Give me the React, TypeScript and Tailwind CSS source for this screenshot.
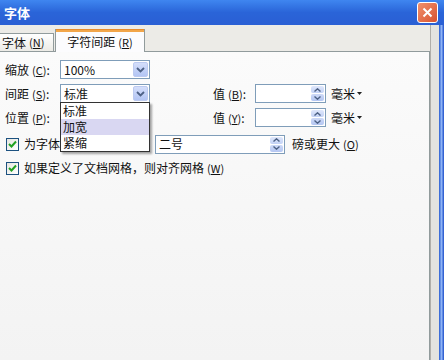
import React from "react";

const font = { fontFamily: '"Noto Sans CJK SC", "Noto Sans", sans-serif' };

function U({ c }: { c: string }) {
  return (
    <span className="text-[11px] ml-[3px]">
      (<span className="underline">{c}</span>)
    </span>
  );
}

function Chevron({ up }: { up?: boolean }) {
  return (
    <svg width="7" height="4" viewBox="0 0 7 4">
      <path
        d={up ? "M0.5 3.5 L3.5 0.8 L6.5 3.5" : "M0.5 0.5 L3.5 3.2 L6.5 0.5"}
        fill="none"
        stroke="#4d6185"
        strokeWidth="1.4"
      />
    </svg>
  );
}

function Combo({ value, w }: { value: string; w: string }) {
  return (
    <div className={`${w} h-[19px] border border-[#7f9db9] bg-white flex items-center pl-[3px] pr-[1px]`}>
      <span className="flex-1 text-[12px] leading-none text-[#111]">{value}</span>
      <div className="w-[15px] h-[15px] rounded-[2px] bg-gradient-to-b from-[#d4defa] to-[#b3c5f4] border border-[#bccaf0] flex items-center justify-center">
        <svg width="9" height="6" viewBox="0 0 9 6">
          <path d="M1 1 L4.5 4.5 L8 1" fill="none" stroke="#4d6185" strokeWidth="1.8" />
        </svg>
      </div>
    </div>
  );
}

function Spin({ value, w }: { value?: string; w: string }) {
  return (
    <div className={`${w} h-[19px] border border-[#7f9db9] bg-white flex items-center pl-[3px] pr-[1px]`}>
      <span className="flex-1 text-[12px] leading-none text-[#111]">{value}</span>
      <div className="w-[13px] h-[15px] flex flex-col gap-[1px]">
        <div className="flex-1 rounded-[2px] bg-gradient-to-b from-[#dfe7fb] to-[#c2d1f5] flex items-center justify-center">
          <Chevron up />
        </div>
        <div className="flex-1 rounded-[2px] bg-gradient-to-b from-[#cdd9f7] to-[#b4c6f2] flex items-center justify-center">
          <Chevron />
        </div>
      </div>
    </div>
  );
}

function Check() {
  return (
    <div className="w-[13px] h-[13px] border border-[#1c5180] bg-gradient-to-br from-[#e6e6e0] to-white flex items-center justify-center">
      <svg width="9" height="8" viewBox="0 0 9 8">
        <path d="M1 4 L3.5 6.5 L8 1.5" fill="none" stroke="#21a121" strokeWidth="2" />
      </svg>
    </div>
  );
}

function Unit() {
  return (
    <span className="flex items-center gap-[2px] text-[12px] text-[#111]">
      毫米
      <svg width="5" height="3" viewBox="0 0 5 3">
        <path d="M0 0 L5 0 L2.5 3 Z" fill="#222" />
      </svg>
    </span>
  );
}

export default function App() {
  return (
    <div className="w-[444px] h-[360px] overflow-hidden flex flex-col bg-[#0a4fd6]" style={font}>
      {/* Title bar */}
      <div className="h-[25px] shrink-0 flex items-center justify-between pl-[4px] pr-[6px] bg-gradient-to-b from-[#3f86f0] via-[#2a64d8] to-[#2a5fd4]">
        <span className="text-white font-bold text-[13px] leading-none">字体</span>
        <div className="w-[21px] h-[21px] rounded-[3px] border border-white bg-gradient-to-br from-[#f0906c] to-[#d8512e] flex items-center justify-center">
          <svg width="11" height="11" viewBox="0 0 11 11">
            <path d="M1.5 1.5 L9.5 9.5 M9.5 1.5 L1.5 9.5" stroke="white" strokeWidth="2" />
          </svg>
        </div>
      </div>
      {/* Body */}
      <div className="flex-1 flex">
        <div className="flex-1 bg-[#ecebe7] flex flex-col pt-[4px]">
          {/* Tabs */}
          <div className="h-[22px] flex items-end relative z-10">
            <div className="w-[54px] h-[18px] border border-[#919b9c] border-l-0 border-b-0 bg-gradient-to-b from-white to-[#ecebe6] flex items-center pl-[2px] text-[12px] text-[#111]">
              字体<U c="N" />
            </div>
            <div className="w-[90px] h-[23px] -mb-[1px] ml-[1px] border-x border-[#919b9c] bg-[#fcfcfe] flex flex-col">
              <div className="h-[3px] bg-[#f2a64a] border-t border-[#e68b2c]" />
              <div className="flex-1 flex items-center justify-center text-[12px] text-[#111]">
                字符间距<U c="R" />
              </div>
            </div>
          </div>
          {/* Panel */}
          <div className="flex-1 w-[430px] border-t border-r border-[#919b9c] bg-gradient-to-b from-[#fbfbfb] to-[#f3f3f3] relative pt-[8px] text-[12px] text-[#111]">
            <div className="flex flex-col">
              <div className="h-[19px] flex items-center">
                <span className="w-[60px] pl-[5px]">缩放<U c="C" />:</span>
                <Combo value="100%" w="w-[90px]" />
              </div>
              <div className="h-[19px] mt-[5px] flex items-center">
                <span className="w-[60px] pl-[5px]">间距<U c="S" />:</span>
                <Combo value="标准" w="w-[90px]" />
                <span className="ml-[63px] w-[42px]">值<U c="B" />:</span>
                <Spin w="w-[71px]" />
                <span className="ml-[5px]"><Unit /></span>
              </div>
              <div className="h-[19px] mt-[5px] flex items-center">
                <span className="w-[60px] pl-[5px]">位置<U c="P" />:</span>
                <Combo value="" w="w-[90px]" />
                <span className="ml-[63px] w-[42px]">值<U c="Y" />:</span>
                <Spin w="w-[71px]" />
                <span className="ml-[5px]"><Unit /></span>
              </div>
              <div className="h-[20px] mt-[7px] flex items-center">
                <span className="pl-[6px] w-[155px] flex items-center gap-[5px] whitespace-nowrap overflow-hidden">
                  <Check />
                  为字体
                </span>
                <Spin value="二号" w="w-[130px]" />
                <span className="ml-[7px]">磅或更大<U c="O" /></span>
              </div>
              <div className="h-[14px] mt-[7px] flex items-center pl-[6px] gap-[5px]">
                <Check />
                <span>如果定义了文档网格，则对齐网格<U c="W" /></span>
              </div>
            </div>
            {/* Dropdown list */}
            <div className="absolute left-[60px] top-[50px] w-[90px] border border-[#333] bg-white shadow-[2px_2px_2px_rgba(0,0,0,0.35)] flex flex-col">
              <div className="h-[16px] pl-[2px] flex items-center">标准</div>
              <div className="h-[16px] pl-[2px] flex items-center bg-[#d9d7f2]">加宽</div>
              <div className="h-[16px] pl-[2px] flex items-center">紧缩</div>
            </div>
          </div>
        </div>
        <div className="w-[9px] bg-[#e4e3e0] border-l border-[#b0aeaa]" />
        <div className="w-[5px] bg-gradient-to-r from-[#2a5bd0] via-[#8fb3f5] to-[#1f4cc8]" />
      </div>
    </div>
  );
}
